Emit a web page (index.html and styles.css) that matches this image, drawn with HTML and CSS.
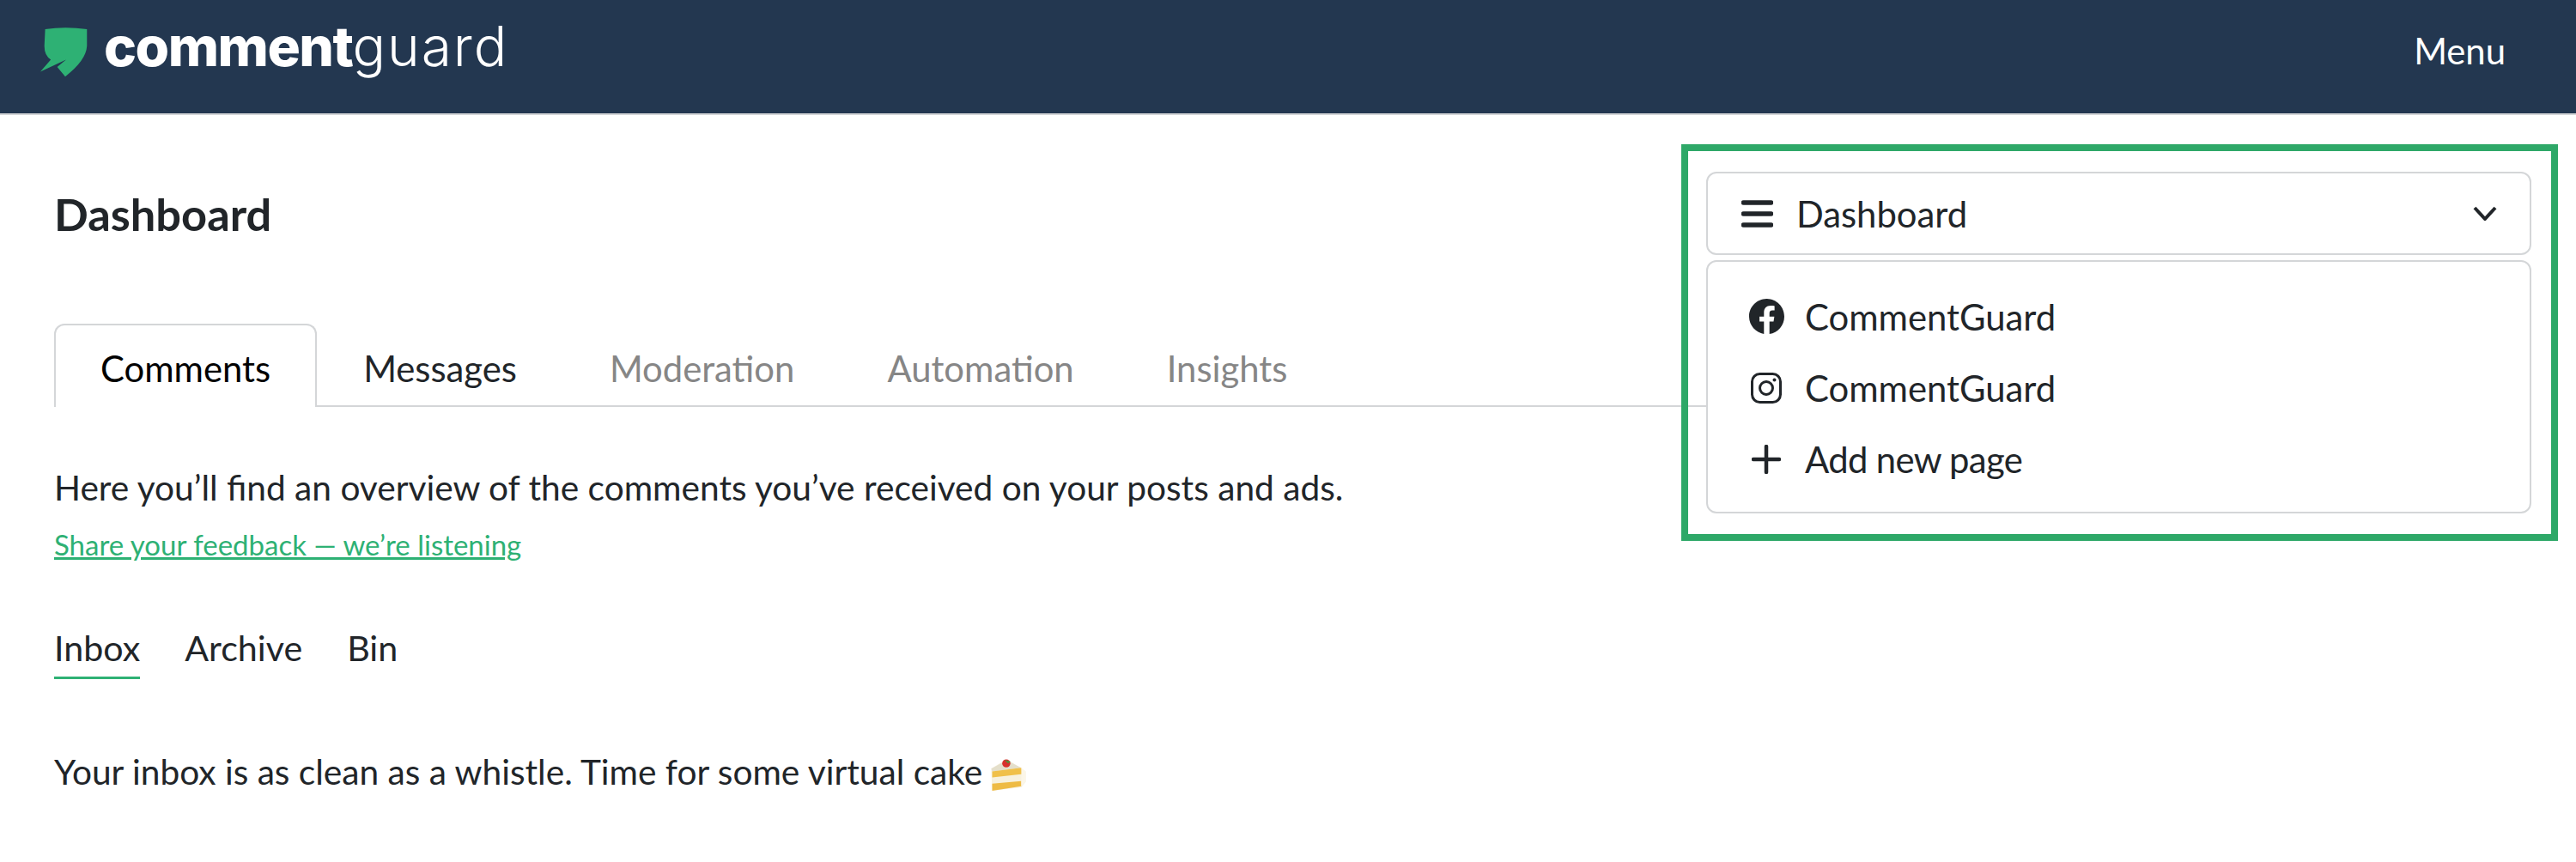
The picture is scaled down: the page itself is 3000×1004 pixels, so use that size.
FILE: index.html
```html
<!DOCTYPE html>
<html lang="en">
<head>
<meta charset="utf-8">
<title>CommentGuard Dashboard</title>
<link rel="stylesheet" href="styles.css">
</head>
<body>
<header class="topbar">
  <a class="brand" href="#">
    <svg class="brand-mark" viewBox="0 0 62 66" aria-hidden="true"><path d="M6 3 Q31 -0.5 58 3 L58 24 Q57 42 31 62 L21 50 L32 41 L0 56 L13 41 Q5 36 5 24 Z"/></svg>
    <span class="brand-name"><b>comment</b><span>guard</span></span>
  </a>
  <a class="menu-link" href="#">Menu</a>
</header>
<main class="page">
  <div class="page-head">
    <h1>Dashboard</h1>
    <div class="switcher">
      <div class="switcher-btn">
        <svg class="icon-bars" viewBox="0 0 37 32" aria-hidden="true"><path d="M2.5 3h32M2.5 16h32M2.5 29h32"/></svg>
        <span>Dashboard</span>
        <svg class="icon-chevron" viewBox="0 0 28 17" aria-hidden="true"><path d="M2 2l12 13L26 2"/></svg>
      </div>
      <div class="switcher-menu">
        <div class="switcher-item">
          <span class="item-icon"><svg class="icon-fb" viewBox="0 0 16 16" aria-hidden="true"><path d="M16 8.049c0-4.446-3.582-8.05-8-8.05C3.58 0-.002 3.603-.002 8.05c0 4.017 2.926 7.347 6.75 7.951v-5.625h-2.03V8.05H6.75V6.275c0-2.017 1.195-3.131 3.022-3.131.876 0 1.791.157 1.791.157v1.98h-1.009c-.993 0-1.303.621-1.303 1.258v1.51h2.218l-.354 2.326H9.25V16c3.824-.604 6.75-3.934 6.75-7.951z"/></svg></span>
          <span>CommentGuard</span>
        </div>
        <div class="switcher-item">
          <span class="item-icon"><svg class="icon-ig" viewBox="0 0 36 36" aria-hidden="true"><rect x="1.5" y="1.5" width="33" height="33" rx="9"/><circle cx="18" cy="18" r="7.5"/><circle class="dot" cx="27.5" cy="8.5" r="2"/></svg></span>
          <span>CommentGuard</span>
        </div>
        <div class="switcher-item">
          <span class="item-icon"><svg class="icon-plus" viewBox="0 0 34 34" aria-hidden="true"><path d="M17 2v30M2 17h30"/></svg></span>
          <span class="item-add">Add new page</span>
        </div>
      </div>
    </div>
  </div>

  <nav class="tabs">
    <a class="tab tab-active" href="#">Comments</a>
    <a class="tab" href="#">Messages</a>
    <a class="tab tab-muted" href="#">Moderation</a>
    <a class="tab tab-muted" href="#">Automation</a>
    <a class="tab tab-muted" href="#">Insights</a>
  </nav>

  <p class="intro">Here you’ll find an overview of the comments you’ve received on your posts and ads.</p>
  <a class="feedback" href="#">Share your feedback — we’re listening</a>

  <nav class="subtabs">
    <a class="subtab subtab-active" href="#">Inbox</a>
    <a class="subtab" href="#">Archive</a>
    <a class="subtab" href="#">Bin</a>
  </nav>

  <p class="empty">Your inbox is as clean as a whistle. Time for some virtual cake<svg class="cake" viewBox="0 0 40 36" aria-hidden="true">
      <path fill="#f7f1de" d="M0 11 L13 3 L22 3 L39 14 L39 26 L34 32 L1 36 Z"/>
      <path fill="#e4dfcb" d="M0 11 L13 4 L22 4 L34 10 L1 14 Z"/>
      <path fill="#f0c04a" d="M1 14 L34 10 L36 17 L1 21 Z"/>
      <path fill="#eebb45" d="M1 28 L34 25 L34 31 L1 36 Z"/>
      <path fill="#fbf6e8" d="M34 10 L39 14 L39 26 L34 31 Z"/>
      <circle fill="#d8302c" cx="17" cy="5" r="4.6"/>
      <path fill="#4f8f3a" d="M15 1 L22 3 L19 5 Z"/>
    </svg></p>
</main>
<div class="callout" aria-hidden="true"></div>
</body>
</html>
```

FILE: styles.css
```css
* { box-sizing: border-box; }
html, body { margin: 0; padding: 0; }
body {
  position: relative;
  min-height: 1004px;
  overflow: hidden;
  background: #fff;
  color: #212529;
  font-family: Lato, "Open Sans", sans-serif;
  font-size: 41.8px;
  line-height: 60px;
}
a { color: inherit; text-decoration: none; }

.topbar {
  display: flex;
  align-items: center;
  justify-content: space-between;
  height: 134px;
  padding: 0 82px 14px 47px;
  background: #233750;
  border-bottom: 2px solid #d4d6d8;
}
.brand { display: flex; align-items: center; gap: 16px; }
.brand-mark { width: 58px; height: 62px; margin-top: 6px; fill: #2eb174; }
.brand-name {
  margin-bottom: 10px;
  color: #fff;
  font-family: Inter, sans-serif;
  font-size: 64px;
  line-height: 70px;
  white-space: nowrap;
}
.brand-name b { font-weight: 800; letter-spacing: -1.5px; }
.brand-name span { font-weight: 300; letter-spacing: 2px; }
.menu-link { color: #fff; line-height: 60px; }

.page { padding: 66px 52px 0 63px; }
.page-head {
  display: flex;
  align-items: center;
  justify-content: space-between;
  height: 97px;
}
h1 { margin: 0; font-size: 52.4px; line-height: 60px; font-weight: 700; }

.switcher { position: relative; width: 961px; }
.switcher-btn {
  display: flex;
  align-items: center;
  height: 97px;
  padding: 0 38px 0 39px;
  border: 2px solid #d4d6d8;
  border-radius: 12px;
  background: #fff;
}
.icon-bars { width: 37px; height: 32px; margin-right: 27px; fill: none; stroke: #212529; stroke-width: 5.5; stroke-linecap: round; }
.icon-chevron { width: 28px; height: 17px; margin-left: auto; fill: none; stroke: #212529; stroke-width: 4; }
.switcher-menu {
  position: absolute;
  top: 103px;
  left: 0;
  right: 0;
  z-index: 2;
  height: 295px;
  padding: 22px 0 0 47px;
  border: 2px solid #d4d6d8;
  border-radius: 12px;
  background: #fff;
}
.switcher-item { display: flex; align-items: center; height: 83px; }
.item-icon { display: flex; justify-content: center; width: 42px; margin-right: 24px; }
.item-add { letter-spacing: -0.65px; }
.icon-fb { width: 41px; height: 41px; fill: #212529; }
.icon-ig { width: 36px; height: 36px; fill: none; stroke: #212529; stroke-width: 3; }
.icon-ig .dot { fill: #212529; stroke: none; }
.icon-plus { width: 34px; height: 34px; fill: none; stroke: #212529; stroke-width: 4.5; stroke-linecap: round; }

.tabs {
  display: flex;
  margin-top: 80px;
  height: 97px;
  border-bottom: 2px solid #d4d6d8;
}
.tab {
  height: 97px;
  padding: 20px 52px 0;
  border: 2px solid transparent;
  border-bottom: 0;
  border-radius: 12px 12px 0 0;
  white-space: nowrap;
}
.tab-active { color: #000; border-color: #d4d6d8; background: #fff; }
.tab-muted { color: #868686; }

.intro { margin: 64px 0 0; font-size: 40.65px; }
.feedback {
  display: block;
  width: max-content;
  margin-top: 12px;
  color: #2eb174;
  font-size: 33px;
  line-height: 48px;
  text-decoration: underline;
}

.subtabs { display: flex; gap: 52px; margin-top: 66px; font-size: 41.2px; }
.subtab { height: 67px; line-height: 60px; }
.subtab-active { border-bottom: 3px solid #2eb174; }

.empty { margin: 78px 0 0; white-space: nowrap; font-size: 40.65px; }
.cake { display: inline-block; width: 42px; height: 37px; margin-left: 10px; vertical-align: -7px; }

.callout {
  position: absolute;
  top: 168px;
  left: 1958px;
  width: 1021px;
  height: 462px;
  border: 8px solid #2ea868;
  pointer-events: none;
}
```
